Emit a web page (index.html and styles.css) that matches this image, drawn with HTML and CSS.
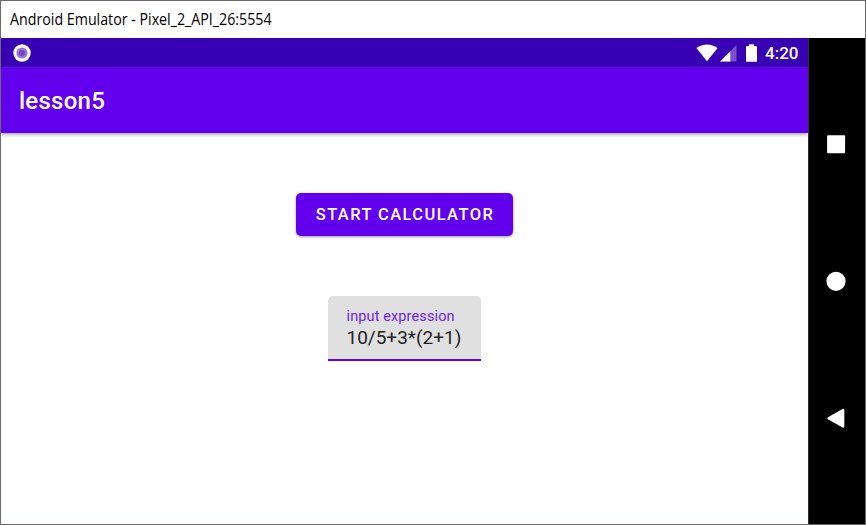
FILE: index.html
```html
<!DOCTYPE html>
<html lang="en">
<head>
<meta charset="utf-8">
<title>Android Emulator</title>
<link rel="stylesheet" href="styles.css">
</head>
<body>
<div class="window">
  <header class="titlebar"><span class="window-title">Android Emulator - Pixel_2_API_26:5554</span></header>
  <div class="device">
    <main class="screen">
      <div class="statusbar">
        <svg class="notification" width="18" height="18" viewBox="0 0 18 18"><circle cx="9" cy="9" r="8.7" fill="#fff"/><circle cx="9" cy="9" r="5.6" fill="#9574d6"/><circle cx="9" cy="9" r="3" fill="#7048c4"/></svg>
        <svg class="wifi" width="22" height="18" viewBox="0 0 22 18"><path d="M.4 4C6.5-.7 15.500-.7 21.600 4L11 17.300z" fill="#fff"/></svg>
        <svg class="signal" width="17" height="17" viewBox="0 0 17 17"><path d="M0 16.500 16.500 0V16.500z" fill="#7750cb"/><path d="M0 16.500 10.300 6.200V16.500z" fill="#fff"/></svg>
        <svg class="battery" width="11" height="18" viewBox="0 0 11 18"><path d="M3 .3h5v1.600h2q1 0 1 1v14q0 .9-1 .9H1q-1 0-1-.9v-14q0-1 1-1h2z" fill="#fff"/></svg>
        <span class="clock">4:20</span>
      </div>
      <div class="appbar"><h1 class="app-title">lesson5</h1></div>
      <div class="content">
        <button class="start">START CALCULATOR</button>
        <div class="field">
          <span class="label">input expression</span>
          <span class="value">10/5+3*(2+1)</span>
        </div>
      </div>
    </main>
    <nav class="navbar">
      <svg width="20" height="20" viewBox="0 0 20 20"><rect x="1.100" y="1.300" width="18" height="18" rx="1" fill="#fff"/></svg>
      <svg width="20" height="20" viewBox="0 0 20 20"><circle cx="10" cy="10.300" r="9.600" fill="#fff"/></svg>
      <svg width="20" height="20" viewBox="0 0 20 20"><path d="M2 9.300 16.500.9q1.700-.6 1.800 1v16.700q-.1 1.500-1.800.9L2 11.300q-1.500-1 0-2z" fill="#fff"/></svg>
    </nav>
  </div>
</div>
</body>
</html>
```
FILE: styles.css
```css
* { box-sizing: border-box; }
body { margin: 0; }
.window {
  width: 866px;
  height: 525px;
  border: 1px solid #6c6a6b;
  background: #fff;
  display: flex;
  flex-direction: column;
  overflow: hidden;
}
.titlebar { height: 37px; padding: 0 0 2px 9px; display: flex; align-items: center; }
.window-title {
  font: 15.500px/20px "Open Sans", sans-serif;
  color: #000;
  white-space: nowrap;
  transform: scaleX(.918);
  transform-origin: left;
}
.device { flex: 1; display: flex; }
.screen { width: 807px; display: flex; flex-direction: column; font-family: Roboto, sans-serif; }
.statusbar {
  height: 29px;
  padding: 0 9.500px 0 12px;
  background: #3700b3;
  display: flex;
  align-items: center;
  color: #fff;
}
.statusbar svg { flex: none; }
.wifi { margin-left: auto; }
.signal { margin: 1px 0 0 2px; }
.battery { margin-left: 9px; }
.clock { margin: 1px 0 0 8px; font-size: 17px; font-weight: 500; line-height: 20px; }
.appbar {
  height: 66px;
  padding: 2px 0 0 18px;
  background: #6200ee;
  box-shadow: 0 1px 4px rgba(0, 0, 0, .45);
  display: flex;
  align-items: center;
  clip-path: inset(0 0 -8px 0);
}
.app-title { margin: 0; color: #fff; font-size: 24px; font-weight: 500; line-height: 30px; letter-spacing: .25px; }
.content { flex: 1; display: flex; flex-direction: column; align-items: center; padding-top: 60px; }
.start {
  width: 217px;
  height: 43px;
  padding: 0 0 0 1px;
  border: 0;
  border-radius: 5px;
  background: #6200ee;
  color: #fff;
  font: 500 16.500px/20px Roboto, sans-serif;
  letter-spacing: 1.400px;
  white-space: nowrap;
  box-shadow: 0 1px 3px rgba(0, 0, 0, .4);
}
.field {
  width: 153px;
  height: 65px;
  margin-top: 60px;
  padding: 12px 0 0 18.500px;
  display: flex;
  flex-direction: column;
  background: #e0e0e0;
  border-bottom: 2px solid #6200ee;
  border-radius: 5px 5px 0 0;
  white-space: nowrap;
}
.label { color: #6c1ee9; font-size: 14.500px; line-height: 18px; letter-spacing: .120px; }
.value { color: #222; font-size: 19px; line-height: 26px; margin-top: -1px; }
.navbar {
  flex: 1;
  background: #000;
  border-left: 1px solid #303030;
  display: flex;
  flex-direction: column;
  align-items: center;
  padding: 96px 2px 0 0;
  gap: 117px;
}
```
